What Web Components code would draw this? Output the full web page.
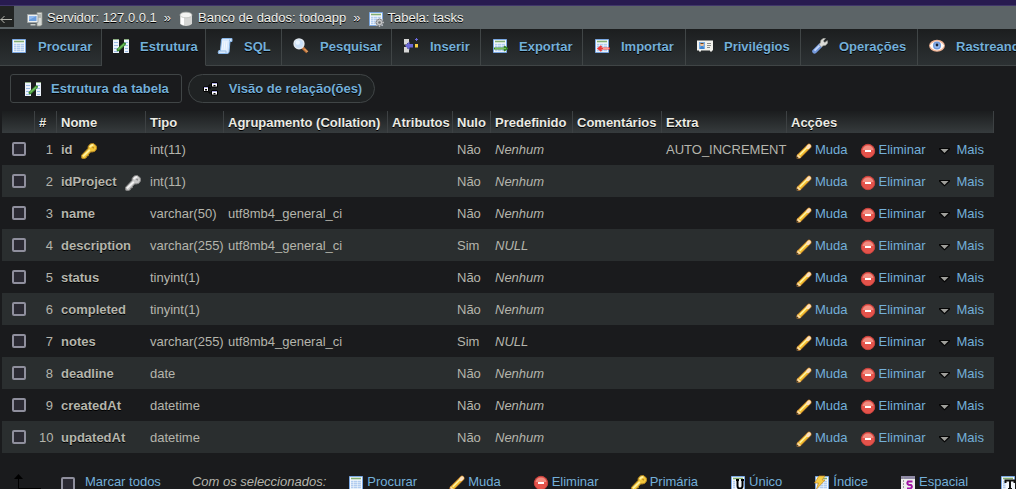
<!DOCTYPE html>
<html lang="pt">
<head>
<meta charset="utf-8">
<title>Tabela: tasks</title>
<style>
html, body { height: 100%; }
body { margin: 0; overflow: hidden; background: #1a1b1d; color: #b5b5ac; font: 13px/16px "Liberation Sans", Arial, sans-serif; }
</style>
</head>
<body>
<db-page></db-page>
<script>
const key = (hi, mid, lo) => `<path d="M7 5.500 7.300 3 9.500.9 12.500.6 15.200 2.800 15.600 5.800 13.800 8.300 11 9 9.800 8.800 7.500 11.200 7.300 12.800 5.700 13 5.400 14.600 3.500 15.500.8 15.200.6 12.200z" fill="${mid}" stroke="${lo}"/><path d="M1.900 13.400 8.800 6.800M8.700 4.200 10.500 2.300 12.300 2" stroke="${hi}" stroke-width="1.800" fill="none"/><path d="m11.500 4 1.300 1.300" stroke="${lo}" stroke-width="1.300"/>`;
const sheet = `<path d="M1.500 1.500h13v13h-13z" fill="#f4f8fd" stroke="#79a7e2"/><path d="M3 3.500h10" stroke="#83ae72" stroke-width="1.600"/><path d="M3 6.500h2.500m.500 0h3m.500 0h3.500M3 8.500h2.500m.500 0h3m.500 0h3.500M3 10.500h2.500m.500 0h3m.500 0h3.500M3 12.500h2.500m.500 0h3m.500 0h3.500" stroke="#b2cdf0" stroke-width="1.400"/>`;
const ICONS = {
  back: `<path d="M14 8.500H2.500M6.500 5 3 8.500 6.500 12" fill="none" stroke="#b8b8b0"/>`,
  server: `<path d="M10 1.500h5v12l-1.500 1.500H10z" fill="#d9dcd8" stroke="#92968f" stroke-width=".8"/><path d="M11 4h3m-3 2h3" stroke="#8f938d"/><path d="M.5 3.500h10.500v8H.5z" fill="#edf0f0" stroke="#9ea4a6"/><path d="M2 5h7.500v5H2z" fill="#6a9dde"/><path d="M2 5h7.500L2 9z" fill="#92baf0"/><path d="M3.500 13h5v1.500h-5z" fill="#c7cbc9"/>`,
  database: `<path d="M2 4v8.500C3 15.800 13 15.800 14 12.500V4z" fill="#d5d6d4"/><path d="M3 5v7.500q1 1.500 3 1.800V6z" fill="#fff"/><ellipse cx="8" cy="4" rx="6" ry="2.800" fill="#f4f4f2" stroke="#b9bbb8" stroke-width=".7"/>`,
  table: sheet + `<circle cx="11.500" cy="11.500" r="3.300" fill="#c4c5c6" stroke="#77797b"/><path d="M11.500 6.800v2m0 5.400v2M6.800 11.500h2m5.400 0h2M8.200 8.200l1.300 1.300m4 4 1.300 1.300m0-6.600-1.300 1.300m-4 4-1.300 1.300" stroke="#b6b8ba" stroke-width="1.400"/><circle cx="11.500" cy="11.500" r="1.300" fill="#6b6e70"/>`,
  browse: sheet,
  structure: `<path d="M0 1h6v14H0zM11 1h5v14h-5z" fill="#edf3fb"/><path d="M1 4.500h4m-4 3h4m-4 3h4m-4 3h4M12 4.500h3m-3 3h3m-3 3h3m-3 3h3" stroke="#9bbce7"/><path d="M0 1.500h6m5 0h5" stroke="#8dad82"/><path d="M5 11.800 11.500 5.800" stroke="#398a31" stroke-width="3" stroke-linecap="round"/><path d="m5.200 11.500 6-5.500" stroke="#72bd5f" stroke-width="1.300"/>`,
  sql: `<path d="M4.500 1.500Q4.500.5 6 .5h9v3h-2L12 14q-.3 1.500-2 1.500H1.500q-1-1.500.5-3h1.500z" fill="#d8e9fd" stroke="#89b7e9"/><path d="M6 3 5 12M8 3 7 12m3-9-1 9" stroke="#f3f9ff"/><path d="M12.500 3.500V1.500m-11 11.500H9v2" stroke="#9abee4" fill="none"/>`,
  search: `<path d="m9.500 9.500 4.800 4.800" stroke="#c0733a" stroke-width="3"/><path d="m11.500 11 3 3" stroke="#efb87e"/><circle cx="6" cy="5.800" r="4.900" fill="#c9e0f8" stroke="#e2e9f0" stroke-width="1.500"/><circle cx="4.800" cy="4.500" r="2.200" fill="#e9f5ff"/>`,
  insert: `<path d="M1 1h5v4H4v1.500H1zM1 14.500h5v-4H4V9H1z" fill="#d7d7d7"/><path d="M2 7.800 6.500 3.500V6H10v3.500H6.500v2.500z" fill="#6a68d9"/><path d="M12 6h3v3.500h-3z" fill="#f7d044"/><path d="M13.500 0v3M12 1.500h3" stroke="#6a68d9"/>`,
  export: sheet + `<path d="M2 10.500h12M12 8.300l3 2.200-3 2.200" fill="none" stroke="#368427" stroke-width="2"/><path d="M3 10.500h11" stroke="#79be5c"/>`,
  import: sheet + `<path d="M5 10.500h11M7.500 8l-3 2.500 3 2.500" fill="none" stroke="#ec3838" stroke-width="2"/><path d="M9 10.500h6" stroke="#ff9d91"/>`,
  rights: `<path d="M0 2.500h16v10h-1v1h-2v-1H4v1H2v-1H0z" fill="#f2f2ed"/><path d="M2 4h6v7H2z" fill="#7aaee6"/><circle cx="5" cy="6.500" r="1.800" fill="#f1bf91"/><path d="M3.500 5.500h3" stroke="#70441d"/><path d="M3 11q0-3 2-3t2 3" fill="#3d83cf"/><path d="M10 5.500h4m-4 2h4m-4 2h3" stroke="#898c8b"/>`,
  tools: `<path d="m2.500 13.300 5.500-5.500" stroke="#7398db" stroke-width="4.600" stroke-linecap="round"/><path d="m2.500 12.600 5-5" stroke="#c3d7fb" stroke-width="2"/><path d="m9.500 9-2.300-2.300L8.400 4.800 8.900 2.200 11.500.2 13.500.5l-2.200 2.500 1.500 1.500L15.300 2.600 15.700 5 13.700 7.300l-2.700.400z" fill="#dcdcd7" stroke="#999c96" stroke-width=".6"/>`,
  eye: `<ellipse cx="8" cy="7.800" rx="7.900" ry="6" fill="#efb294"/><path d="M.8 7.800Q3.500 3.200 8 3.200t7.200 4.600Q12.500 12.400 8 12.400T.8 7.800" fill="#fffaf5"/><circle cx="8" cy="7.500" r="4" fill="#6e98dc"/><circle cx="8" cy="7.500" r="2.600" fill="#96b9ed"/><circle cx="8" cy="7" r="1.400" fill="#152033"/>`,
  relation: `<path d="M6 7H4V4h4M4 10v2h4" transform="translate(2)" fill="none" stroke="#000"/><path d="M.5 6h5v4.500h-5zM8.500 1.500h6V6h-6zM8.500 9.500h6V14h-6z" fill="#fff" stroke="#000"/><path d="M9 2h5v1H9zM9 10h5v1H9zM1 6h4v1H1z" fill="#aaa8e4"/><path d="M2 8h2v1.500H2zM10.500 4h2v1.200h-2zM10.500 12h2v1.200h-2z" fill="#000"/>`,
  edit: `<path d="M3 13.200 13 3.200" stroke="#b8752a" stroke-width="5" stroke-linecap="round"/><path d="M3.200 13 13 3.200" stroke="#f1c030" stroke-width="3.600" stroke-linecap="round"/><path d="M3.800 11.700 11.300 4.200" stroke="#fff3a2" stroke-width="1.500"/><path d="m12 4.200 1.200-1.200" stroke="#fbdfc0" stroke-width="3.400" stroke-linecap="round"/><path d="m.7 15.400 1-4.200 3.300 3.200z" fill="#fbdca5"/><path d="m.5 15.600.6-2.200 1.700 1.600z" fill="#503716"/>`,
  remove: `<circle cx="8" cy="8" r="6.700" fill="#e4534b" stroke="#c8423d"/><path d="M2.500 7Q3.500 2.500 8 2.500T13.500 7" fill="#f28c80"/><path d="M5 8h6" stroke="#fff" stroke-width="2"/>`,
  caret: `<path d="M1 5h11v1.500L6.500 11.500 1 6.500z" fill="#050505"/><path d="M2.500 6h8l-4 4z" fill="#a0a09c"/>`,
  key: key('#fff2a0', '#f3c63a', '#b98a22'),
  greykey: key('#f2f2f2', '#c6c6c6', '#888'),
  unique: sheet + `<path d="M5 4.500h9v10H5z" fill="#f4f8fd"/><path d="M6 5h3m2 0h3M7.500 5v6q0 2.500 2.500 2.500t2.500-2.500V5" fill="none" stroke="#000" stroke-width="2"/>`,
  index: sheet + `<path d="M5 1h6L8 5h3L2.500 14l2-6H.5z" fill="#f6cc45" stroke="#c98c22" stroke-width=".7"/>`,
  spatial: `<path d="M1 1h14v14H1z" fill="#eee"/><path d="M1 1h14v3H1z" fill="#8f8aa5"/><path d="M3.500 2v13" stroke="#9b9b9b" stroke-dasharray="2 1"/><path d="M12.500 6.500H8q-1.500 2 .5 3.200l2.500.300q2 2-.500 3.500H7" fill="none" stroke="#a014a3" stroke-width="2"/>`,
  text: sheet + `<path d="M6 5h9v9H6z" fill="#f4f8fd"/><path d="M5.500 8V5.500h9V8M10 5.500V14m-2 0h4" fill="none" stroke="#111" stroke-width="2"/>`,
  upleft: `<path d="M4.500 3v11.500H27" fill="none" stroke="#000"/><path d="m0 5 4.500-5L9 5z" fill="#000"/>`
};

class DbIcon extends HTMLElement {
  connectedCallback() {
    const name = this.getAttribute('name');
    const wide = name === 'upleft';
    this.attachShadow({ mode: 'open' }).innerHTML = `
      <style>:host{display:block;flex:none;width:${wide ? 32 : 16}px;height:16px}svg{display:block}</style>
      <svg width="${wide ? 32 : 16}" height="16" viewBox="0 0 ${wide ? 32 : 16} 16" aria-hidden="true">${ICONS[name]}</svg>`;
  }
}
customElements.define('db-icon', DbIcon);

class DbLink extends HTMLElement {
  connectedCallback() {
    this.attachShadow({ mode: 'open' }).innerHTML = `
      <style>
        :host{display:block;flex:none}
        a{display:flex;align-items:center;gap:3px;color:#73afd9;text-decoration:none;white-space:nowrap}
        db-icon{margin-top:2px}
      </style>
      <a href="#"><db-icon name="${this.getAttribute('icon')}"></db-icon><slot></slot></a>`;
  }
}
customElements.define('db-link', DbLink);

class DbCheck extends HTMLElement {
  connectedCallback() {
    this.attachShadow({ mode: 'open' }).innerHTML = `
      <style>
        :host{display:block;flex:none}
        input{display:block;appearance:none;box-sizing:border-box;width:14px;height:14px;margin:0;border:2px solid #8f8f9d;border-radius:2px;background:#2b2a33}
        input:checked{background:#73afd9}
      </style>
      <input type="checkbox" aria-label="${this.getAttribute('label')}">`;
  }
}
customElements.define('db-check', DbCheck);

class DbBreadcrumb extends HTMLElement {
  connectedCallback() {
    this.attachShadow({ mode: 'open' }).innerHTML = `
      <style>
        :host{display:block;background:#5c6467;border-top:1px solid #40366a;overflow:hidden}
        nav{display:flex;align-items:center;height:23px}
        button{align-self:flex-start;display:flex;align-items:center;justify-content:flex-end;box-sizing:border-box;width:14px;height:21px;margin:0 13px 0 0;padding:4px 0 0;border:0;background:#222423}
        a{display:flex;align-items:center;gap:4px;color:#f0f0ea;text-decoration:none;white-space:nowrap;text-shadow:0 1px 0 #000}
        span{padding:0 7px;color:#eee;text-shadow:0 1px 0 #000}
        a db-icon{margin-top:2px}
      </style>
      <nav aria-label="Caminho">
        <button type="button" aria-label="Esconder painel"><db-icon name="back"></db-icon></button>
        <a href="#"><db-icon name="server"></db-icon>Servidor: 127.0.0.1</a><span>»</span>
        <a href="#"><db-icon name="database"></db-icon>Banco de dados: todoapp</a><span>»</span>
        <a href="#"><db-icon name="table"></db-icon>Tabela: tasks</a>
      </nav>`;
  }
}
customElements.define('db-breadcrumb', DbBreadcrumb);

class DbTab extends HTMLElement {
  connectedCallback() {
    this.attachShadow({ mode: 'open' }).innerHTML = `
      <style>
        :host{display:block;flex:none;box-sizing:border-box;height:37px;border-right:1px solid #404546;border-bottom:1px solid #404546;background:linear-gradient(#1c1e1f,#2c3133)}
        :host([active]){background:#1a1b1d;border-bottom-color:#1a1b1d}
        a{display:flex;align-items:center;gap:11px;height:36px;padding-left:11px;color:#73afd9;font-weight:bold;text-decoration:none;white-space:nowrap;text-shadow:0 1px 0 #000}
        db-icon{margin-bottom:2px}
      </style>
      <a href="#"><db-icon name="${this.getAttribute('icon')}"></db-icon><slot></slot></a>`;
  }
}
customElements.define('db-tab', DbTab);

class DbPill extends HTMLElement {
  connectedCallback() {
    this.attachShadow({ mode: 'open' }).innerHTML = `
      <style>
        :host{display:block;flex:none}
        a{display:flex;align-items:center;gap:10px;height:27px;padding:0 12px 0 14px;border:1px solid #404546;border-radius:20px;background:#1f2223;color:#73afd9;font-weight:bold;text-decoration:none;white-space:nowrap;text-shadow:0 1px 0 #000}
        :host([active]) a{border-radius:3px;background:#1a1b1d}
      </style>
      <a href="#"><db-icon name="${this.getAttribute('icon')}"></db-icon><slot></slot></a>`;
  }
}
customElements.define('db-pill', DbPill);

const ROWS = [
  ['id', 'int(11)', '', 'Não', 'Nenhum', 'AUTO_INCREMENT', 'key'],
  ['idProject', 'int(11)', '', 'Não', 'Nenhum', '', 'greykey'],
  ['name', 'varchar(50)', 'utf8mb4_general_ci', 'Não', 'Nenhum', ''],
  ['description', 'varchar(255)', 'utf8mb4_general_ci', 'Sim', 'NULL', ''],
  ['status', 'tinyint(1)', '', 'Não', 'Nenhum', ''],
  ['completed', 'tinyint(1)', '', 'Não', 'Nenhum', ''],
  ['notes', 'varchar(255)', 'utf8mb4_general_ci', 'Sim', 'NULL', ''],
  ['deadline', 'date', '', 'Não', 'Nenhum', ''],
  ['createdAt', 'datetime', '', 'Não', 'Nenhum', ''],
  ['updatedAt', 'datetime', '', 'Não', 'Nenhum', '']
];
const COLS = [['', 33], ['#', 22], ['Nome', 89], ['Tipo', 78], ['Agrupamento (Collation)', 164], ['Atributos', 65], ['Nulo', 38], ['Predefinido', 82], ['Comentários', 89], ['Extra', 125], ['Acções', 207]];

class DbColumns extends HTMLElement {
  connectedCallback() {
    this.attachShadow({ mode: 'open' }).innerHTML = `
      <style>
        :host{display:block}
        table{table-layout:fixed;width:0;border-collapse:separate;border-spacing:0;white-space:nowrap}
        th,td{box-sizing:border-box;padding:2px 4px 0;text-align:left}
        thead tr{background:linear-gradient(#1b1d1e,#363b3d)}
        thead th{height:22px;color:#ebebe4;border-right:1px solid #3d4143;text-shadow:0 1px 0 #000}
        tbody tr{height:32px}
        tbody tr:nth-child(even){background:#2a2e2f}
        tbody th{text-shadow:0 1px 0 #000}
        td:first-child{padding:0 0 0 10px}
        td:nth-child(2){text-align:right}
        .name,.acts{display:flex;align-items:center;height:16px}
        .name{gap:8px}
        .name db-icon{margin-top:2px}
        .acts{gap:12px;padding-left:5px}
      </style>
      <table>
        <colgroup>${COLS.map(c => `<col style="width:${c[1]}px">`).join('')}</colgroup>
        <thead><tr>${COLS.map(c => `<th scope="col">${c[0]}</th>`).join('')}</tr></thead>
        <tbody>${ROWS.map((r, i) => `<tr>
          <td><db-check label="${r[0]}"></db-check></td>
          <td>${i + 1}</td>
          <th scope="row"><div class="name">${r[0]}${r[6] ? `<db-icon name="${r[6]}"></db-icon>` : ''}</div></th>
          <td>${r[1]}</td><td>${r[2]}</td><td></td><td>${r[3]}</td><td><i>${r[4]}</i></td><td></td><td>${r[5]}</td>
          <td><div class="acts"><db-link icon="edit">Muda</db-link><db-link icon="remove">Eliminar</db-link><db-link icon="caret">Mais</db-link></div></td>
        </tr>`).join('')}</tbody>
      </table>`;
  }
}
customElements.define('db-columns', DbColumns);

class DbBulk extends HTMLElement {
  connectedCallback() {
    this.attachShadow({ mode: 'open' }).innerHTML = `
      <style>
        :host{display:flex;align-items:center;height:20px;white-space:nowrap}
        .mark{display:flex;align-items:center;gap:10px;margin:0 31px 0 15px;color:#73afd9}
        input{appearance:none;box-sizing:border-box;width:14px;height:14px;margin:4px 0 0;border:2px solid #8f8f9d;border-radius:2px;background:#2b2a33}
        .acts{display:flex;gap:32px;padding-left:22px}
      </style>
      <db-icon name="upleft"></db-icon>
      <label class="mark"><input type="checkbox">Marcar todos</label>
      <i>Com os seleccionados:</i>
      <div class="acts">
        <db-link icon="browse">Procurar</db-link><db-link icon="edit">Muda</db-link><db-link icon="remove">Eliminar</db-link><db-link icon="key">Primária</db-link><db-link icon="unique">Único</db-link><db-link icon="index">Índice</db-link><db-link icon="spatial">Espacial</db-link><db-link icon="text"></db-link>
      </div>`;
  }
}
customElements.define('db-bulk', DbBulk);

const TABS = [['browse', 'Procurar', 102], ['structure', 'Estrutura', 104], ['sql', 'SQL', 76], ['search', 'Pesquisar', 110], ['insert', 'Inserir', 89], ['export', 'Exportar', 102], ['import', 'Importar', 103], ['rights', 'Privilégios', 115], ['tools', 'Operações', 117], ['eye', 'Rastreando', 120]];

class DbPage extends HTMLElement {
  connectedCallback() {
    this.attachShadow({ mode: 'open' }).innerHTML = `
      <style>
        :host{display:block;height:100vh;overflow:hidden}
        .strip{height:5px;background:#281b50}
        .tabs{display:flex;overflow:hidden}
        .views{display:flex;gap:6px;padding:8px 10px}
        db-columns{margin-left:2px}
        db-bulk{margin:19px 0 0 14px}
      </style>
      <div class="strip"></div>
      <db-breadcrumb></db-breadcrumb>
      <nav class="tabs" aria-label="Separadores">${TABS.map(t => `<db-tab icon="${t[0]}" style="width:${t[2]}px"${t[0] === 'structure' ? ' active' : ''}>${t[1]}</db-tab>`).join('')}</nav>
      <nav class="views" aria-label="Vistas">
        <db-pill icon="structure" active>Estrutura da tabela</db-pill><db-pill icon="relation">Visão de relação(ões)</db-pill>
      </nav>
      <db-columns></db-columns>
      <db-bulk></db-bulk>`;
  }
}
customElements.define('db-page', DbPage);
</script>
</body>
</html>
